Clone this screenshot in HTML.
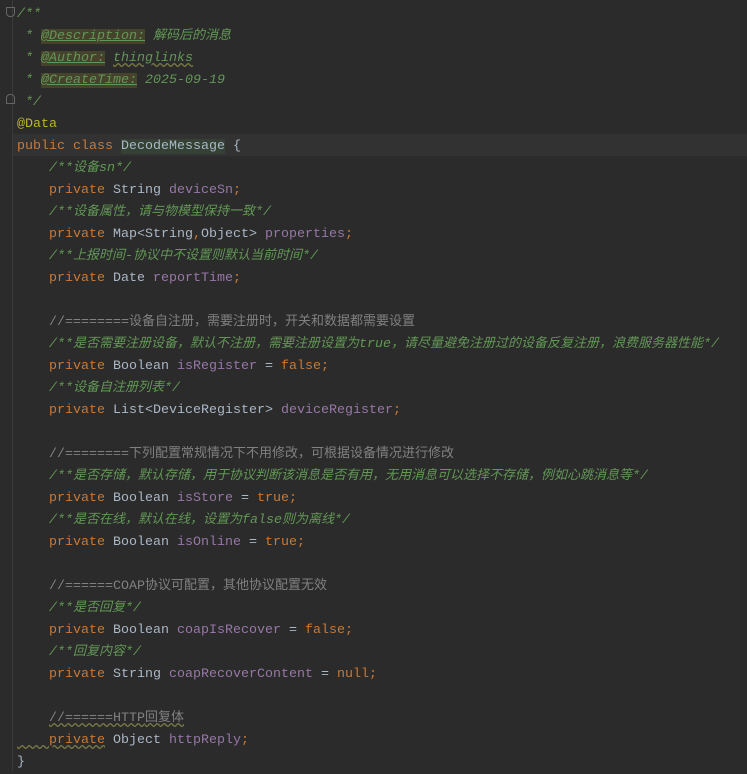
<!DOCTYPE html>
<html><head><meta charset="utf-8"><style>
html,body{margin:0;padding:0;background:#2b2b2b;width:747px;height:771px;overflow:hidden}
.g{position:absolute;left:12px;top:0;width:1px;height:771px;background:#3a3a3a}
.hl{position:absolute;left:13px;top:134px;width:734px;height:22px;background:#323232}
pre{position:absolute;left:17px;top:4px;margin:0;font-family:"Liberation Mono",monospace;font-size:13.33px;line-height:22px;color:#a9b7c6}
.z{font-family:"Noto Sans CJK SC",sans-serif;font-size:13px;line-height:1;vertical-align:baseline}
.k{color:#cc7832}.d{color:#629755;font-style:italic}.f{color:#9876aa}.l{color:#808080}.a{color:#bbb529}
.t{background:#46432d;text-decoration:underline;text-decoration-color:#629755}
.w{text-decoration:underline wavy #7a7a45}
.fold{position:absolute;left:6px;width:9px;height:10px;border:1px solid #666;box-sizing:border-box}
</style></head><body>
<div class="g"></div><div class="hl"></div>
<div class="fold" style="top:7px;border-radius:0 0 4px 4px"></div>
<div class="fold" style="top:94px;border-radius:4px 4px 0 0"></div>
<pre><span class="d">/**
 * <span class="t">@Description:</span> <span class="z">解码后的消息</span>
 * <span class="t">@Author:</span> <span class="w">thinglinks</span>
 * <span class="t">@CreateTime:</span> 2025-09-19
 */</span>
<span class="a">@Data</span>
<span class="k">public class </span><span style="background:#344134">DecodeMessage</span> {
    <span class="d">/**<span class="z">设备</span>sn*/</span>
    <span class="k">private </span>String <span class="f">deviceSn</span><span class="k">;</span>
    <span class="d">/**<span class="z">设备属性，请与物模型保持一致</span>*/</span>
    <span class="k">private </span>Map&lt;String<span class="k">,</span>Object&gt; <span class="f">properties</span><span class="k">;</span>
    <span class="d">/**<span class="z">上报时间</span>-<span class="z">协议中不设置则默认当前时间</span>*/</span>
    <span class="k">private </span>Date <span class="f">reportTime</span><span class="k">;</span>

    <span class="l">//========<span class="z">设备自注册，需要注册时，开关和数据都需要设置</span></span>
    <span class="d">/**<span class="z">是否需要注册设备，默认不注册，需要注册设置为</span>true<span class="z">，请尽量避免注册过的设备反复注册，浪费服务器性能</span>*/</span>
    <span class="k">private </span>Boolean <span class="f">isRegister </span>= <span class="k">false;</span>
    <span class="d">/**<span class="z">设备自注册列表</span>*/</span>
    <span class="k">private </span>List&lt;DeviceRegister&gt; <span class="f">deviceRegister</span><span class="k">;</span>

    <span class="l">//========<span class="z">下列配置常规情况下不用修改，可根据设备情况进行修改</span></span>
    <span class="d">/**<span class="z">是否存储，默认存储，用于协议判断该消息是否有用，无用消息可以选择不存储，例如心跳消息等</span>*/</span>
    <span class="k">private </span>Boolean <span class="f">isStore </span>= <span class="k">true;</span>
    <span class="d">/**<span class="z">是否在线，默认在线，设置为</span>false<span class="z">则为离线</span>*/</span>
    <span class="k">private </span>Boolean <span class="f">isOnline </span>= <span class="k">true;</span>

    <span class="l">//======COAP<span class="z">协议可配置，其他协议配置无效</span></span>
    <span class="d">/**<span class="z">是否回复</span>*/</span>
    <span class="k">private </span>Boolean <span class="f">coapIsRecover </span>= <span class="k">false;</span>
    <span class="d">/**<span class="z">回复内容</span>*/</span>
    <span class="k">private </span>String <span class="f">coapRecoverContent </span>= <span class="k">null;</span>

    <span class="l w">//======HTTP<span class="z">回复体</span></span>
<span class="w">    <span class="k">private</span></span> Object <span class="f">httpReply</span><span class="k">;</span>
}</pre>
</body></html>
